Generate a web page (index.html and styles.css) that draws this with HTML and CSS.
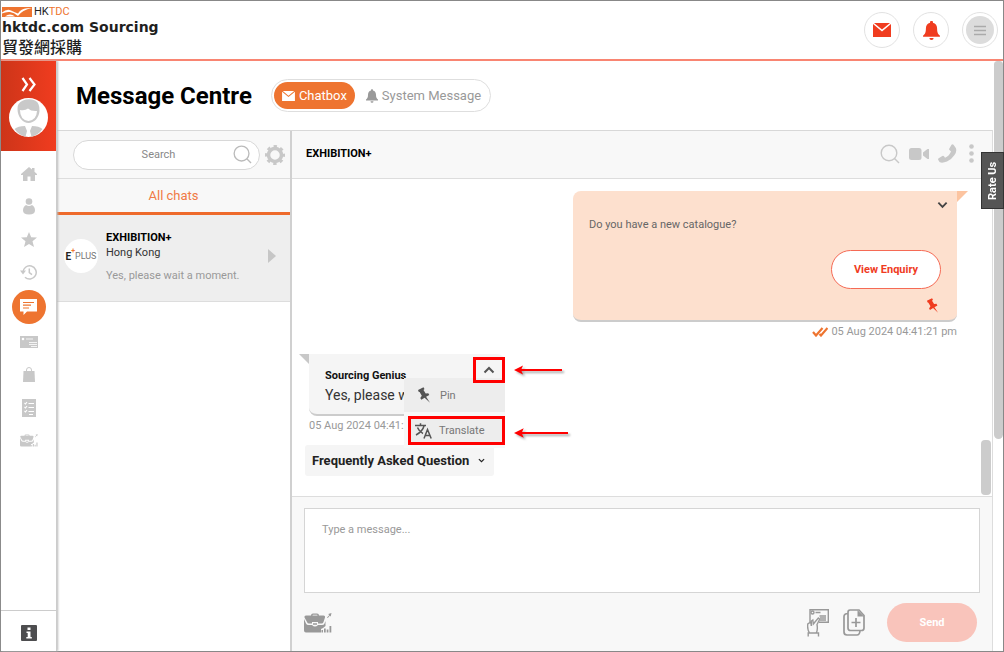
FILE: index.html
```
<!DOCTYPE html>
<html lang="en">
<head>
<meta charset="utf-8">
<title>Message Centre</title>
<meta name="viewport" content="width=device-width, initial-scale=1">
<link rel="stylesheet" href="styles.css">
</head>
<body>
<svg class="sprite" aria-hidden="true">
  <symbol id="mail" viewBox="0 0 18 14"><path fill="currentColor" d="M0 1 9 8.500 18 1V14H0ZM1 0H17L9 6.500Z"/></symbol>
  <symbol id="bell" viewBox="0 0 16 18"><path fill="currentColor" d="M8 0a1.300 1.300 0 0 1 1.300 1.700C12 2.300 13.300 4.500 13.300 7c0 4 1 5.500 2.700 6.800V15H0v-1.200C1.700 12.500 2.700 11 2.700 7c0-2.500 1.300-4.700 4-5.300A1.300 1.300 0 0 1 8 0ZM6 16h4a2 2 0 0 1-4 0Z"/></symbol>
  <symbol id="search" viewBox="0 0 20 20"><g fill="none" stroke="currentColor" stroke-width="1.400"><circle cx="9" cy="9" r="7.800"/><path d="m14.500 14.500 4.500 4.500"/></g></symbol>
  <symbol id="pin" viewBox="0 0 14 16"><path fill="currentColor" d="M1 3 6.500.2l1 1.700-1 1 2.200 3.600 2.600-.3 1 1.700-3.200 1.900L13 15.800 7.600 10.800l-3.300 2-1-1.700 1.500-2.400L2.600 5 1.800 4.900Z"/></symbol>
  <symbol id="down" viewBox="0 0 12 8"><path fill="none" stroke="currentColor" stroke-width="2" d="m1.500 1.500 4.500 4.500 4.500-4.500"/></symbol>
  <symbol id="case" viewBox="0 0 28 20"><path fill="currentColor" d="M7 2.500Q7 .5 9 .5h4q2 0 2 2h4.500q2 0 1.500 2L19.500 9q-.5 1.500-2 1.500H14V9H8v1.500H5Q3.500 10.500 3 9L.5 4.500Q0 2.500 2 2.500ZM8.500 2.500h5Q13.500 1.700 13 1.700H9Q8.500 1.700 8.500 2.500ZM0 6l2 4.500q.7 1.500 2.500 1.500H8q3 3 6 0h4q2 0 2.500-1.500L21.500 8v5L19 15l-2 1v3.500H2q-2 0-2-2ZM9 10.200h4v1.600H9ZM17.500 17H19v2.500h-1.500ZM20 15.500h1.700v4H20ZM22.700 16.500h1.700v3h-1.700ZM25.500 13h1.800v6.500h-1.800ZM23 4.500l2.200-2.300L24.300 1 27.500 0l-.8 3.400-1-.6L23.800 5Z"/></symbol>
  <symbol id="arrow" viewBox="0 0 50 12" preserveAspectRatio="xMinYMid slice"><path fill="red" d="m0 6 9-4.500-1.500 3.500H50v2H7.500L9 10.500Z"/></symbol>
</svg>
<div class="page">
  <header class="topbar">
    <a class="brand" href="#">
      <span class="brand-mark">
        <svg width="30" height="10" viewBox="0 0 30 10"><path fill="#ee7430" d="M0 0h30v10H0Z"/><path fill="#fff" d="M0 5.500Q5 1.500 9 3.500t7 3Q19 1.500 25 1.200L30 1Q20 3 16 9 12 5.500 8 5T0 6.500Z"/><path fill="#fff" d="M3 9.500q5-4 10 0Z"/></svg>
        <span class="brand-hk">HK<span class="brand-tdc">TDC</span></span>
      </span>
      <span class="brand-name">hktdc.com Sourcing</span>
      <span class="brand-cn" lang="zh-Hant">貿發網採購</span>
    </a>
    <div class="top-actions">
      <button class="round" aria-label="Messages"><svg width="18" height="14"><use href="#mail"/></svg></button>
      <button class="round" aria-label="Notifications"><svg width="17" height="19"><use href="#bell"/></svg></button>
      <button class="round" aria-label="Menu"><span class="disc"><svg width="12" height="11" viewBox="0 0 12 11"><path stroke="#aaa" stroke-width="1.300" d="M0 1.500h12M0 5.500h12M0 9.500h12"/></svg></span></button>
    </div>
  </header>
  <div class="body">
    <nav class="rail" aria-label="Main">
      <div class="profile">
        <button class="plain" aria-label="Expand"><svg width="15" height="15" viewBox="0 0 15 15"><path fill="none" stroke="#fff" stroke-width="2.200" d="m1.500 1 4.500 6.500L1.500 14M8.500 1l5 6.500-5 6.500"/></svg></button>
        <svg width="39" height="39" viewBox="0 0 39 39"><circle cx="19.500" cy="19.500" r="19.500" fill="#fff"/><path fill="#c9c9c9" d="M8.500 11Q8 5 14 2.500q6-2.500 12 0Q31 5 30.500 13C30 20 25 25 19.500 25S8.500 19 8.500 11Z"/><path fill="#fff" d="M11 12q5 1 8-1.500 3 3 9 2.500-.5 9-8.500 10Q11 22 11 12Z"/><path fill="#c9c9c9" d="M5.500 31Q9 28 16 28l2 5-1.500 5.700Q10 37.500 5.500 31ZM33.500 31Q30 28 23 28l-2 5 1.500 5.700q6.500-1.200 11-7.700Z"/></svg>
      </div>
      <ul class="rail-list">
        <li><a href="#" aria-label="Home"><svg width="16" height="14" viewBox="0 0 16 14"><path fill="currentColor" d="M8 0l3 2.600V1h2.500v3.800L16 7v1h-2v6H9.500V9.500h-3V14H2V8H0V7Z"/></svg></a></li>
        <li><a href="#" aria-label="Account"><svg width="12" height="17" viewBox="0 0 12 17"><circle cx="6" cy="3.500" r="3.300" fill="currentColor"/><path fill="currentColor" d="M3 7q3 2 6 0 3 1.500 3 5.500 0 4-6 4t-6-4Q0 8.500 3 7Z"/></svg></a></li>
        <li><a href="#" aria-label="Favourites"><svg width="16" height="15" viewBox="0 0 16 15"><path fill="currentColor" d="m8 0 2.200 5.200 5.800.4-4.500 3.700L13 15l-5-3.100L3 15l1.500-5.700L0 5.600l5.800-.4Z"/></svg></a></li>
        <li><a href="#" aria-label="History"><svg width="17" height="15" viewBox="0 0 17 15"><path fill="none" stroke="currentColor" stroke-width="1.500" d="M3 7.500a6.600 6.600 0 1 1 2 4.700M9.300 3.500v4.200l2.700 2"/><path fill="currentColor" d="M0 5.500h6L3 9.500Z"/></svg></a></li>
        <li><a class="current" href="#" aria-label="Message Centre"><svg width="17" height="16" viewBox="0 0 17 16"><path fill="#fff" d="M0 0h17v12.500H7L3.500 16v-3.500H0Z"/><path stroke="#ee7430" stroke-width="1.200" d="M3 3.500h11M3 6.200h8M3 9h6"/></svg></a></li>
        <li><a href="#" aria-label="Business card"><svg width="18" height="12" viewBox="0 0 18 12"><path fill="currentColor" d="M0 0h18v12H0Z"/><circle cx="3" cy="3" r="1.300" fill="#fff"/><path stroke="#fff" stroke-width=".8" d="M6 3h7M9 6.500h8M9 8.500h8M11 10.500h6"/></svg></a></li>
        <li><a href="#" aria-label="Orders"><svg width="12" height="15" viewBox="0 0 12 15"><path fill="currentColor" d="M.5 4h11l.5 11H0Z"/><path fill="none" stroke="currentColor" d="M3.500 6V3q0-2.500 2.500-2.500T8.500 3v3"/></svg></a></li>
        <li><a href="#" aria-label="Checklist"><svg width="14" height="18" viewBox="0 0 14 18"><path fill="currentColor" d="M0 0h14v18H0Z"/><path fill="none" stroke="#fff" stroke-width="1.100" d="m2.500 4 1 1L5 3M6.500 4.500H12M2.500 8l1 1L5 7M6.500 8.500H12M2.500 12l1 1L5 11M6.500 12.500H12M7 15.500h4"/></svg></a></li>
        <li><a href="#" aria-label="Business matching"><svg width="18" height="13"><use href="#case"/></svg></a></li>
      </ul>
      <a class="info" href="#" aria-label="Information"><svg width="16" height="16" viewBox="0 0 16 16"><rect width="16" height="16" rx="1" fill="#4d4d4f"/><path fill="#fff" d="M6.500 2.500h3V5h-3ZM5.500 6.500h4V12h1.300v1.500H5.300V12h1.400V8H5.500Z"/></svg></a>
    </nav>
    <main class="main">
      <div class="heading">
        <h1>Message Centre</h1>
        <div class="switch">
          <button class="tab tab-on"><svg width="13" height="10"><use href="#mail"/></svg>Chatbox</button>
          <button class="tab"><svg width="12" height="14"><use href="#bell"/></svg>System Message</button>
        </div>
      </div>
      <div class="panels">
        <section class="chats" aria-label="Chats">
          <div class="finder">
            <label class="find"><input type="text" placeholder="Search" aria-label="Search"><svg width="19" height="19"><use href="#search"/></svg></label>
            <button class="plain" aria-label="Settings"><svg width="20" height="20" viewBox="0 0 20 20"><circle cx="10" cy="10" r="6.500" fill="none" stroke="currentColor" stroke-width="3.500"/><circle cx="10" cy="10" r="8.700" fill="none" stroke="currentColor" stroke-width="2.600" stroke-dasharray="3.400 3.433" stroke-dashoffset="1.700"/></svg></button>
          </div>
          <button class="all">All chats</button>
          <a class="chat" href="#">
            <span class="logo"><b>E</b><i>+</i>PLUS</span>
            <span class="chat-text"><strong>EXHIBITION+</strong><span>Hong Kong</span><span class="preview">Yes, please wait a moment.</span></span>
            <svg width="8" height="14" viewBox="0 0 8 14"><path fill="#c6c6c6" d="M0 0l8 7-8 7Z"/></svg>
          </a>
        </section>
        <section class="talk" aria-label="Conversation">
          <div class="talk-head">
            <h2>EXHIBITION+</h2>
            <div class="tools">
              <button class="plain" aria-label="Search conversation"><svg width="20" height="20"><use href="#search"/></svg></button>
              <button class="plain" aria-label="Video call"><svg width="20" height="12" viewBox="0 0 20 12"><rect width="12.500" height="12" rx="2.500" fill="currentColor"/><path fill="currentColor" d="M14 4.500 18.500 1H20v10h-1.500L14 7.500Z"/></svg></button>
              <button class="plain" aria-label="Call"><svg width="19" height="19" viewBox="0 0 19 19"><path fill="currentColor" d="M13.500.7q1-1 2 0l2.300 3.300q1.400 3-1.300 7-3 4.500-7.500 6.500-5 2-7.500.5L.3 16q-.7-1 .4-1.800l3.600-2.300q1-.6 1.700.3l1 1.500q4-1.500 6-6.200L11.500 6q-.8-.8 0-1.700Z"/></svg></button>
              <button class="plain" aria-label="More"><svg width="5" height="19" viewBox="0 0 5 19"><g fill="currentColor"><circle cx="2.500" cy="2.500" r="2.300"/><circle cx="2.500" cy="9.500" r="2.300"/><circle cx="2.500" cy="16.500" r="2.300"/></g></svg></button>
            </div>
          </div>
          <div class="stream">
            <article class="sent">
              <div class="sent-card">
                <button class="plain more" aria-label="Message options"><svg width="11" height="8"><use href="#down"/></svg></button>
                <p>Do you have a new catalogue?</p>
                <button class="enquiry">View Enquiry</button>
                <svg class="pinned" width="13" height="15"><use href="#pin"/></svg>
              </div>
              <div class="stamp stamp-right"><svg width="16" height="10" viewBox="0 0 16 10"><path fill="none" stroke="#ee7430" stroke-width="2.200" d="m1 5 3 3.500L10.500 1M7.500 7l1.500 1.500L15.500 1"/></svg>05 Aug 2024 04:41:21 pm</div>
            </article>
            <article class="received">
              <div class="received-card">
                <h3>Sourcing Genius</h3>
                <p>Yes, please wait</p>
                <button class="toggle" aria-label="Message options" aria-expanded="true"><svg class="up" width="12" height="8"><use href="#down"/></svg><svg class="arrow arrow-one"><use href="#arrow"/></svg></button>
                <div class="menu">
                  <button><svg width="14" height="16"><use href="#pin"/></svg>Pin</button>
                  <button class="marked"><svg width="17" height="16" viewBox="0 0 17 16"><path fill="none" stroke="currentColor" stroke-width="1.500" d="M0 2.500h11M5.500.3v2.200M2.500 4.500Q4 8.500 8 10.500M9 3Q7.500 8.500 1 12M9 15.500l3.500-9 3.700 9M10.300 12.500h4.500"/></svg>Translate<svg class="arrow arrow-two"><use href="#arrow"/></svg></button>
                </div>
              </div>
              <div class="stamp">05 Aug 2024 04:41:38 pm</div>
            </article>
            <button class="faq">Frequently Asked Question<svg width="7" height="5"><use href="#down"/></svg></button>
            <span class="stream-thumb"></span>
          </div>
          <form class="composer">
            <textarea placeholder="Type a message..." aria-label="Message"></textarea>
            <div class="composer-row">
              <button type="button" class="plain grow" aria-label="Business tools"><svg width="28" height="20"><use href="#case"/></svg></button>
              <button type="button" class="plain" aria-label="Send business card"><svg width="22" height="28" viewBox="0 0 22 28"><g fill="none" stroke="currentColor" stroke-width="1.400"><path d="M3 13V.8h18.300v12.500H12"/><circle cx="5.500" cy="3.500" r="1.500"/><path d="M8.500 3.500h5M12.500 7h6.500M13 9h6M13 11h6M1.200 27.500V24h10.300v3.500M2.500 24Q0 20 .8 15l3-2 .5 4V12l1.500-1 .5 4 5-6q1.500.5 1 2L10 15.500q1 5-.8 8.500"/></g></svg></button>
              <button type="button" class="plain" aria-label="Attach file"><svg width="22" height="27" viewBox="0 0 22 27"><g fill="none" stroke="currentColor" stroke-width="1.700"><path d="M7 1h9l5 5.500V19q0 2.500-2.500 2.500h-11Q5 21.500 5 19V3.500Q5 1 7 1ZM5 4.500Q1 4.500 1 7.500V23q0 3 3 3h10q2.500 0 3-4M13 9v9M8.500 13.500h9"/></g><path fill="currentColor" d="M14.500 1v6.500H21Z"/></svg></button>
              <button type="button" class="send">Send</button>
            </div>
          </form>
        </section>
      </div>
    </main>
    <div class="track"><span class="thumb"></span></div>
  </div>
  <button class="rate">Rate Us</button>
</div>
</body>
</html>
```
FILE: styles.css
```
* { box-sizing: border-box; }
body { margin: 0; font-family: Roboto, "Noto Sans CJK TC", sans-serif; font-size: 11px; color: #333; background: #fff; }
h1, h2, h3, p, ul { margin: 0; padding: 0; }
button { font: inherit; color: inherit; padding: 0; border: 0; background: none; cursor: pointer; }
a { color: inherit; text-decoration: none; }
svg { display: block; flex: none; }
.sprite { position: absolute; width: 0; height: 0; }
.plain { display: flex; color: #c8c8c8; }

.page { position: relative; min-height: 100vh; display: flex; flex-direction: column; border: 1px solid #888; }
.topbar { display: flex; justify-content: space-between; align-items: center; height: 60px; padding-right: 5px; border-bottom: 2px solid #f98572; }
.brand { display: flex; flex-direction: column; color: #1f1f1f; padding-left: 1px; }
.brand-mark { display: flex; align-items: center; gap: 2px; height: 14px; }
.brand-hk { font-size: 11px; line-height: 14px; }
.brand-tdc { color: #ee7430; }
.brand-name { font: bold 14px/17px "DejaVu Sans", sans-serif; }
.brand-cn { font: 500 16px/20px "Noto Sans CJK TC", sans-serif; }
.top-actions { display: flex; gap: 13px; color: #f03c1f; }
.round { display: flex; align-items: center; justify-content: center; width: 36px; height: 36px; border: 1px solid #e2e2e2; border-radius: 50%; }
.disc { display: flex; align-items: center; justify-content: center; width: 28px; height: 28px; border-radius: 50%; background: #dcdcdc; }

.body { flex: 1; display: flex; }
.rail { position: relative; display: flex; flex-direction: column; width: 56px; border-right: 1px solid #ccc; box-shadow: 1px 0 2px #bbb; }
.profile { display: flex; flex-direction: column; align-items: center; gap: 6px; height: 90px; padding-top: 16px; background: linear-gradient(90deg, #cd3519, #f03c1f); }
.rail-list { flex: 1; list-style: none; padding-top: 6px; color: #c8c8c8; }
.rail-list li { display: flex; justify-content: center; align-items: center; min-height: 33px; }
.rail-list a { display: flex; align-items: center; justify-content: center; }
.rail-list .current { width: 34px; height: 34px; margin: 1px 0; border-radius: 50%; background: #ee7430; }
.info { display: flex; align-items: center; justify-content: center; height: 41px; padding-top: 4px; border-top: 1px solid #ccc; }

.main { flex: 1; min-width: 0; display: flex; flex-direction: column; }
.heading { display: flex; align-items: center; gap: 19px; height: 69px; padding-left: 19px; }
.heading h1 { font-size: 24px; line-height: 28px; color: #000; }
.switch { display: flex; height: 33px; padding: 2px; border: 1px solid #dedede; border-radius: 17px; }
.tab { display: flex; align-items: center; gap: 4px; padding: 0 7px 0 11px; border-radius: 14px; font-size: 13px; color: #999; }
.tab-on { padding: 0 8px; background: #ee7430; color: #fff; }
.panels { flex: 1; display: flex; border-top: 1px solid #d8d8d8; border-right: 1px solid #ddd; }

.chats { display: flex; flex-direction: column; width: 235px; border-right: 2px solid #d0d0d0; }
.finder { display: flex; align-items: center; gap: 5px; height: 48px; padding: 0 5px 0 16px; background: #f8f8f8; border-bottom: 1px solid #ddd; }
.find { flex: 1; display: flex; align-items: center; height: 30px; padding-right: 7px; border: 1px solid #d8d8d8; border-radius: 15px; background: #fff; color: #bbb; }
.find input { flex: 1; min-width: 0; padding: 0 0 0 10px; border: 0; outline: 0; background: none; font: 11px Roboto, sans-serif; text-align: center; }
.find input::placeholder { color: #888; }
.all { height: 36px; background: #f8f8f8; border-bottom: 3px solid #ee6a2b; font-size: 13px; color: #f07a45; }
.chat { display: flex; align-items: center; gap: 8px; height: 87px; padding: 0 14px 4px 7px; background: #eee; border-bottom: 1px solid #ddd; }
.logo { display: flex; align-items: center; justify-content: center; width: 34px; height: 34px; border-radius: 50%; background: #fff; font-size: 9px; color: #777; }
.logo b { color: #222; font-size: 10px; }
.logo i { align-self: flex-start; padding-top: 8px; font-size: 7px; font-style: normal; font-weight: bold; color: #ee7430; }
.chat-text { flex: 1; display: flex; flex-direction: column; line-height: 15px; }
.chat-text strong { color: #000; }
.preview { padding-top: 8px; color: #999; }

.talk { flex: 1; min-width: 0; display: flex; flex-direction: column; }
.talk-head { display: flex; align-items: center; justify-content: space-between; height: 48px; padding: 0 18px 2px 14px; background: #f8f8f8; border-bottom: 1px solid #ddd; }
.talk-head h2 { font-size: 11px; color: #000; }
.tools { display: flex; align-items: center; gap: 9px; }
.tools .plain:last-child { margin-left: 3px; }
.stream { flex: 1; position: relative; display: flex; flex-direction: column; align-items: flex-start; padding: 12px 35px 14px 13px; }
.sent { align-self: flex-end; width: 384px; }
.sent-card { position: relative; display: flex; flex-direction: column; align-items: flex-end; height: 131px; padding: 9px 16px 8px; border-radius: 8px 0 8px 8px; background: #fde0ce; border-bottom: 2px solid #ccc; }
.sent-card::after { content: ""; position: absolute; top: 0; left: 100%; border-top: 11px solid #fcc4a0; border-right: 11px solid transparent; }
.more { color: #444; padding: 1px 0; margin-right: -7px; }
.sent-card p { align-self: stretch; padding-top: 8px; line-height: 14px; color: #666; }
.enquiry { width: 110px; height: 39px; margin-top: 18px; flex: none; border: 1px solid #f56a55; border-radius: 20px; background: #fff; color: #f03c1f; font-weight: bold; }
.pinned { margin: 9px 2px 0; color: #f03c1f; }
.stamp { line-height: 14px; padding-top: 3px; color: #999; }
.stamp-right { display: flex; align-items: center; justify-content: flex-end; gap: 3px; }
.received { width: 196px; margin: 15px 0 0 4px; }
.received-card { position: relative; height: 62px; padding: 14px 16px 0; border-radius: 0 8px 8px; background: #f5f5f5; border-bottom: 2px solid #ccc; }
.received-card::before { content: ""; position: absolute; top: 0; right: 100%; border-top: 10px solid #c8c8c8; border-left: 10px solid transparent; }
.received-card h3 { font-size: 11px; line-height: 15px; color: #111; }
.received-card p { padding-top: 3px; font-size: 14px; line-height: 18px; }
.toggle { position: absolute; z-index: 2; top: 3px; right: 0; width: 32px; height: 26px; display: flex; align-items: center; justify-content: center; border: 3px solid #f00; color: #555; }
.up { transform: rotate(180deg); }
.menu { position: absolute; z-index: 1; top: 24px; right: 0; width: 101px; display: flex; flex-direction: column; align-items: flex-end; gap: 4px; padding-bottom: 3px; background: #f8f8f8; }
.menu button { position: relative; display: flex; align-items: center; gap: 9px; width: 100%; height: 34px; padding-left: 13px; background: #ededed; color: #777; }
.menu svg { color: #555; }
.menu .marked { width: 97px; height: 29px; gap: 7px; padding-left: 4px; border: 3px solid #f00; }
.arrow { position: absolute; height: 12px; filter: drop-shadow(2px 2px 1px #aaa); }
.arrow-one { left: 38px; top: 4px; width: 48px; }
.arrow-two { left: 103px; top: 8px; width: 54px; }
.faq { display: flex; align-items: center; gap: 9px; height: 31px; margin-top: 12px; padding: 0 9px 0 7px; border-radius: 3px; background: #f5f5f5; font-weight: bold; font-size: 13px; color: #222; }
.stream-thumb { position: absolute; right: 1px; bottom: 1px; width: 10px; height: 55px; border-radius: 4px; background: #ccc; }

.composer { padding: 11px 12px 9px; background: #f8f8f8; border-top: 1px solid #ddd; }
.composer textarea { display: block; width: 100%; height: 85px; padding: 13px 17px; border: 1px solid #d5d5d5; resize: none; font: 11px/16px Roboto, sans-serif; }
.composer textarea::placeholder { color: #999; }
.composer-row { display: flex; align-items: center; gap: 14px; padding: 10px 3px 0 0; }
.composer-row .plain { color: #999; }
.composer-row .grow { flex: 1; }
.send { width: 90px; height: 39px; margin-left: 8px; border-radius: 20px; background: #f9c4bb; color: #fff; font-weight: bold; }

.track { width: 10px; padding-left: 1px; background: #fff; }
.thumb { display: block; height: 64%; border-radius: 4px 4px 5px 5px; background: #ccc; }
.rate { position: absolute; z-index: 3; right: -1px; top: 151px; width: 23px; height: 57px; background: #555; border: 1px solid #333; color: #fff; writing-mode: vertical-rl; transform: rotate(180deg); font-weight: bold; font-size: 11px; }
```
